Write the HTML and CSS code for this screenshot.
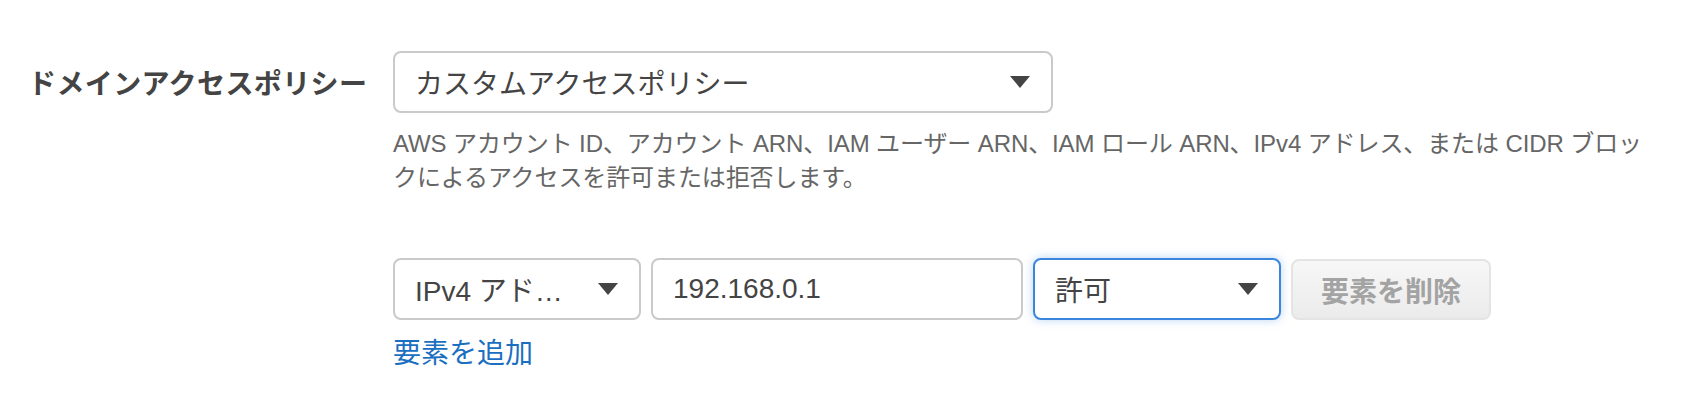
FILE: index.html
```html
<!DOCTYPE html>
<html lang="ja">
<head>
<meta charset="utf-8">
<title>ドメインアクセスポリシー</title>
<link rel="stylesheet" href="styles.css">
</head>
<body>
<div class="form">
  <div class="label">ドメインアクセスポリシー</div>
  <div class="field">
    <div class="select wide">
      <span class="value">カスタムアクセスポリシー</span>
      <svg class="caret" width="20" height="12" viewBox="0 0 20 12"><path d="M0 0 H20 L10 12 Z" fill="#444"/></svg>
    </div>
    <p class="desc"><span class="line">AWS アカウント ID、アカウント ARN、IAM ユーザー ARN、IAM ロール ARN、IPv4 アドレス、または CIDR ブロッ</span><span class="line">クによるアクセスを許可または拒否します。</span></p>
    <div class="row">
      <div class="select type">
        <span class="value">IPv4 アド…</span>
        <svg class="caret" width="20" height="12" viewBox="0 0 20 12"><path d="M0 0 H20 L10 12 Z" fill="#444"/></svg>
      </div>
      <div class="input">192.168.0.1</div>
      <div class="select effect focused">
        <span class="value">許可</span>
        <svg class="caret" width="20" height="12" viewBox="0 0 20 12"><path d="M0 0 H20 L10 12 Z" fill="#444"/></svg>
      </div>
      <div class="btn disabled">要素を削除</div>
    </div>
    <a class="link" href="#">要素を追加</a>
  </div>
</div>
</body>
</html>
```
FILE: styles.css
```css
html, body {
  margin: 0;
  background: #fff;
}
body {
  font-family: "Liberation Sans", "Noto Sans CJK JP", sans-serif;
  color: #444;
}
.form {
  display: grid;
  grid-template-columns: 337px 1fr;
  column-gap: 28px;
  padding: 51px 0 0 28px;
}
.label {
  font-family: "Noto Sans CJK JP", sans-serif;
  font-weight: 700;
  font-size: 28px;
  letter-spacing: 0.4px;
  height: 62px;
  display: flex;
  align-items: center;
  white-space: nowrap;
  color: #444;
}
.field {
  display: flex;
  flex-direction: column;
  align-items: flex-start;
}
.select, .input {
  box-sizing: border-box;
  height: 62px;
  border: 2px solid #cacaca;
  border-radius: 8px;
  background: #fff;
  display: flex;
  align-items: center;
  padding: 0 20px;
  font-size: 28px;
  color: #444;
  white-space: nowrap;
}
.select {
  justify-content: space-between;
}
.wide { width: 660px; }
.type { width: 248px; }
.input { width: 372px; }
.effect { width: 248px; }
.focused {
  border-color: #3a86dc;
  box-shadow: 0 0 10px rgba(58, 134, 220, 0.35);
}
.caret {
  flex: none;
  margin-right: 1px;
}
.desc {
  margin: 14px 0 0;
  font-size: 24px;
  line-height: 34px;
  letter-spacing: -0.1px;
  color: #666;
}
.line {
  display: block;
  white-space: nowrap;
}
.row {
  display: flex;
  gap: 10px;
  margin-top: 63px;
}
.btn {
  box-sizing: border-box;
  width: 200px;
  height: 61px;
  margin-top: 1px;
  border: 2px solid #e4e4e4;
  border-radius: 8px;
  background: linear-gradient(#f7f7f7, #ebebeb);
  display: flex;
  align-items: center;
  justify-content: center;
  font-family: "Noto Sans CJK JP", sans-serif;
  font-weight: 700;
  font-size: 28px;
  color: #a3a3a3;
}
.link {
  margin-top: 17px;
  font-size: 28px;
  line-height: 34px;
  color: #1a6fc0;
  text-decoration: none;
}
```
